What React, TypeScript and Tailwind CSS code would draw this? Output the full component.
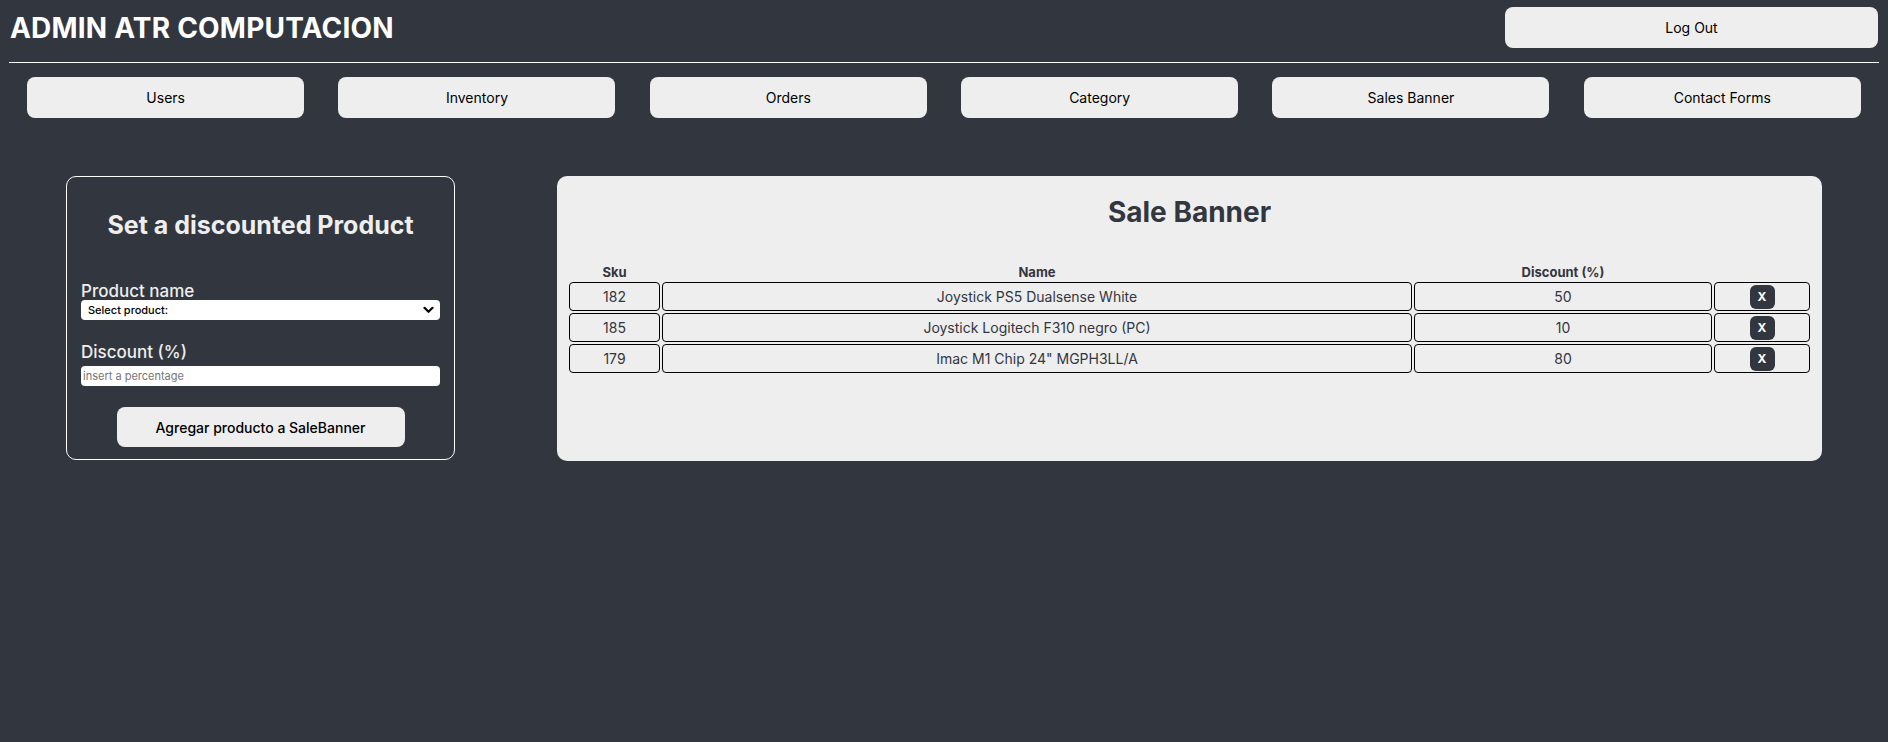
import React from 'react';

interface SaleRow {
  sku: number;
  name: string;
  discount: number;
}

const navItems = ['Users', 'Inventory', 'Orders', 'Category', 'Sales Banner', 'Contact Forms'];

const saleRows: SaleRow[] = [
  { sku: 182, name: 'Joystick PS5 Dualsense White', discount: 50 },
  { sku: 185, name: 'Joystick Logitech F310 negro (PC)', discount: 10 },
  { sku: 179, name: 'Imac M1 Chip 24" MGPH3LL/A', discount: 80 },
];

const App = () => {
  return (
    <div className="min-h-screen w-full bg-[#31363f] font-['Inter','Liberation_Sans',sans-serif]">
      <header className="flex items-center justify-between px-[10px] pt-[7px]">
        <h1 className="text-[28px] font-bold leading-[32px] tracking-[0.2px] text-white">ADMIN ATR COMPUTACION</h1>
        <button className="h-[41px] w-[373px] rounded-[8px] bg-[#eeeeee] text-[14px] text-black">Log Out</button>
      </header>

      <div className="mx-[9px] mt-[14px] h-px bg-white" />

      <nav className="mt-[14px] flex justify-around px-[10px]">
        {navItems.map((item) => (
          <button key={item} className="h-[41px] w-[277px] rounded-[8px] bg-[#eeeeee] text-[14px] text-black">
            {item}
          </button>
        ))}
      </nav>

      <main className="mt-[58px] flex items-start gap-[102px] pl-[66px]">
        <section className="flex h-[284px] w-[389px] flex-col rounded-[10px] border border-white px-[14px] pt-[33px]">
          <h2 className="text-center text-[25px] font-bold leading-[31px] text-[#eeeeee]">Set a discounted Product</h2>

          <label className="mt-[41px] block text-[17px] font-medium leading-[18px] text-[#eeeeee]">Product name</label>
          <div className="relative h-[20px]">
            <select className="block h-[20px] w-full appearance-none rounded-[4px] bg-white pl-[7px] text-[11px] font-medium leading-[20px] text-black outline-none">
              <option>Select product:</option>
            </select>
            <div className="pointer-events-none absolute inset-y-0 right-[6px] flex items-center">
              <svg width="11" height="8" viewBox="0 0 11 8" fill="none">
                <path d="M1.5 1.8 L5.5 5.8 L9.5 1.8" stroke="black" strokeWidth="2.2" strokeLinecap="round" strokeLinejoin="round" />
              </svg>
            </div>
          </div>

          <label className="mt-[23px] block text-[17px] font-medium leading-[19px] text-[#eeeeee]">Discount (%)</label>
          <input
            type="text"
            placeholder="insert a percentage"
            className="mt-[4px] block h-[20px] w-full rounded-[4px] bg-white pl-[2px] text-[11px] text-black outline-none placeholder:text-[#767676]"
          />

          <button className="mx-auto mt-[21px] h-[40px] w-[288px] rounded-[8px] bg-[#eeeeee] text-[14px] font-medium text-black">
            Agregar producto a SaleBanner
          </button>
        </section>

        <section className="h-[285px] w-[1265px] rounded-[10px] bg-[#eeeeee] px-[10px] pt-[19px]">
          <h2 className="text-center text-[28px] font-bold leading-[34px] text-[#31363f]">Sale Banner</h2>

          <table className="mt-[33px] w-full table-fixed border-separate border-spacing-[2px] text-[#31363f]">
            <colgroup>
              <col className="w-[91px]" />
              <col />
              <col className="w-[298px]" />
              <col className="w-[96px]" />
            </colgroup>
            <thead>
              <tr className="text-[13px] font-bold leading-[16px]">
                <th>Sku</th>
                <th>Name</th>
                <th>Discount (%)</th>
                <th />
              </tr>
            </thead>
            <tbody>
              {saleRows.map((row) => (
                <tr key={row.sku} className="h-[29px] text-[14px]">
                  <td className="rounded-[4px] border border-black text-center">{row.sku}</td>
                  <td className="rounded-[4px] border border-black text-center">{row.name}</td>
                  <td className="rounded-[4px] border border-black text-center">{row.discount}</td>
                  <td className="rounded-[4px] border border-black text-center">
                    <button className="inline-flex h-[24px] w-[25px] items-center justify-center rounded-[6px] bg-[#31363f] align-middle text-[12px] font-bold text-white">
                      X
                    </button>
                  </td>
                </tr>
              ))}
            </tbody>
          </table>
        </section>
      </main>
    </div>
  );
};

export default App;
